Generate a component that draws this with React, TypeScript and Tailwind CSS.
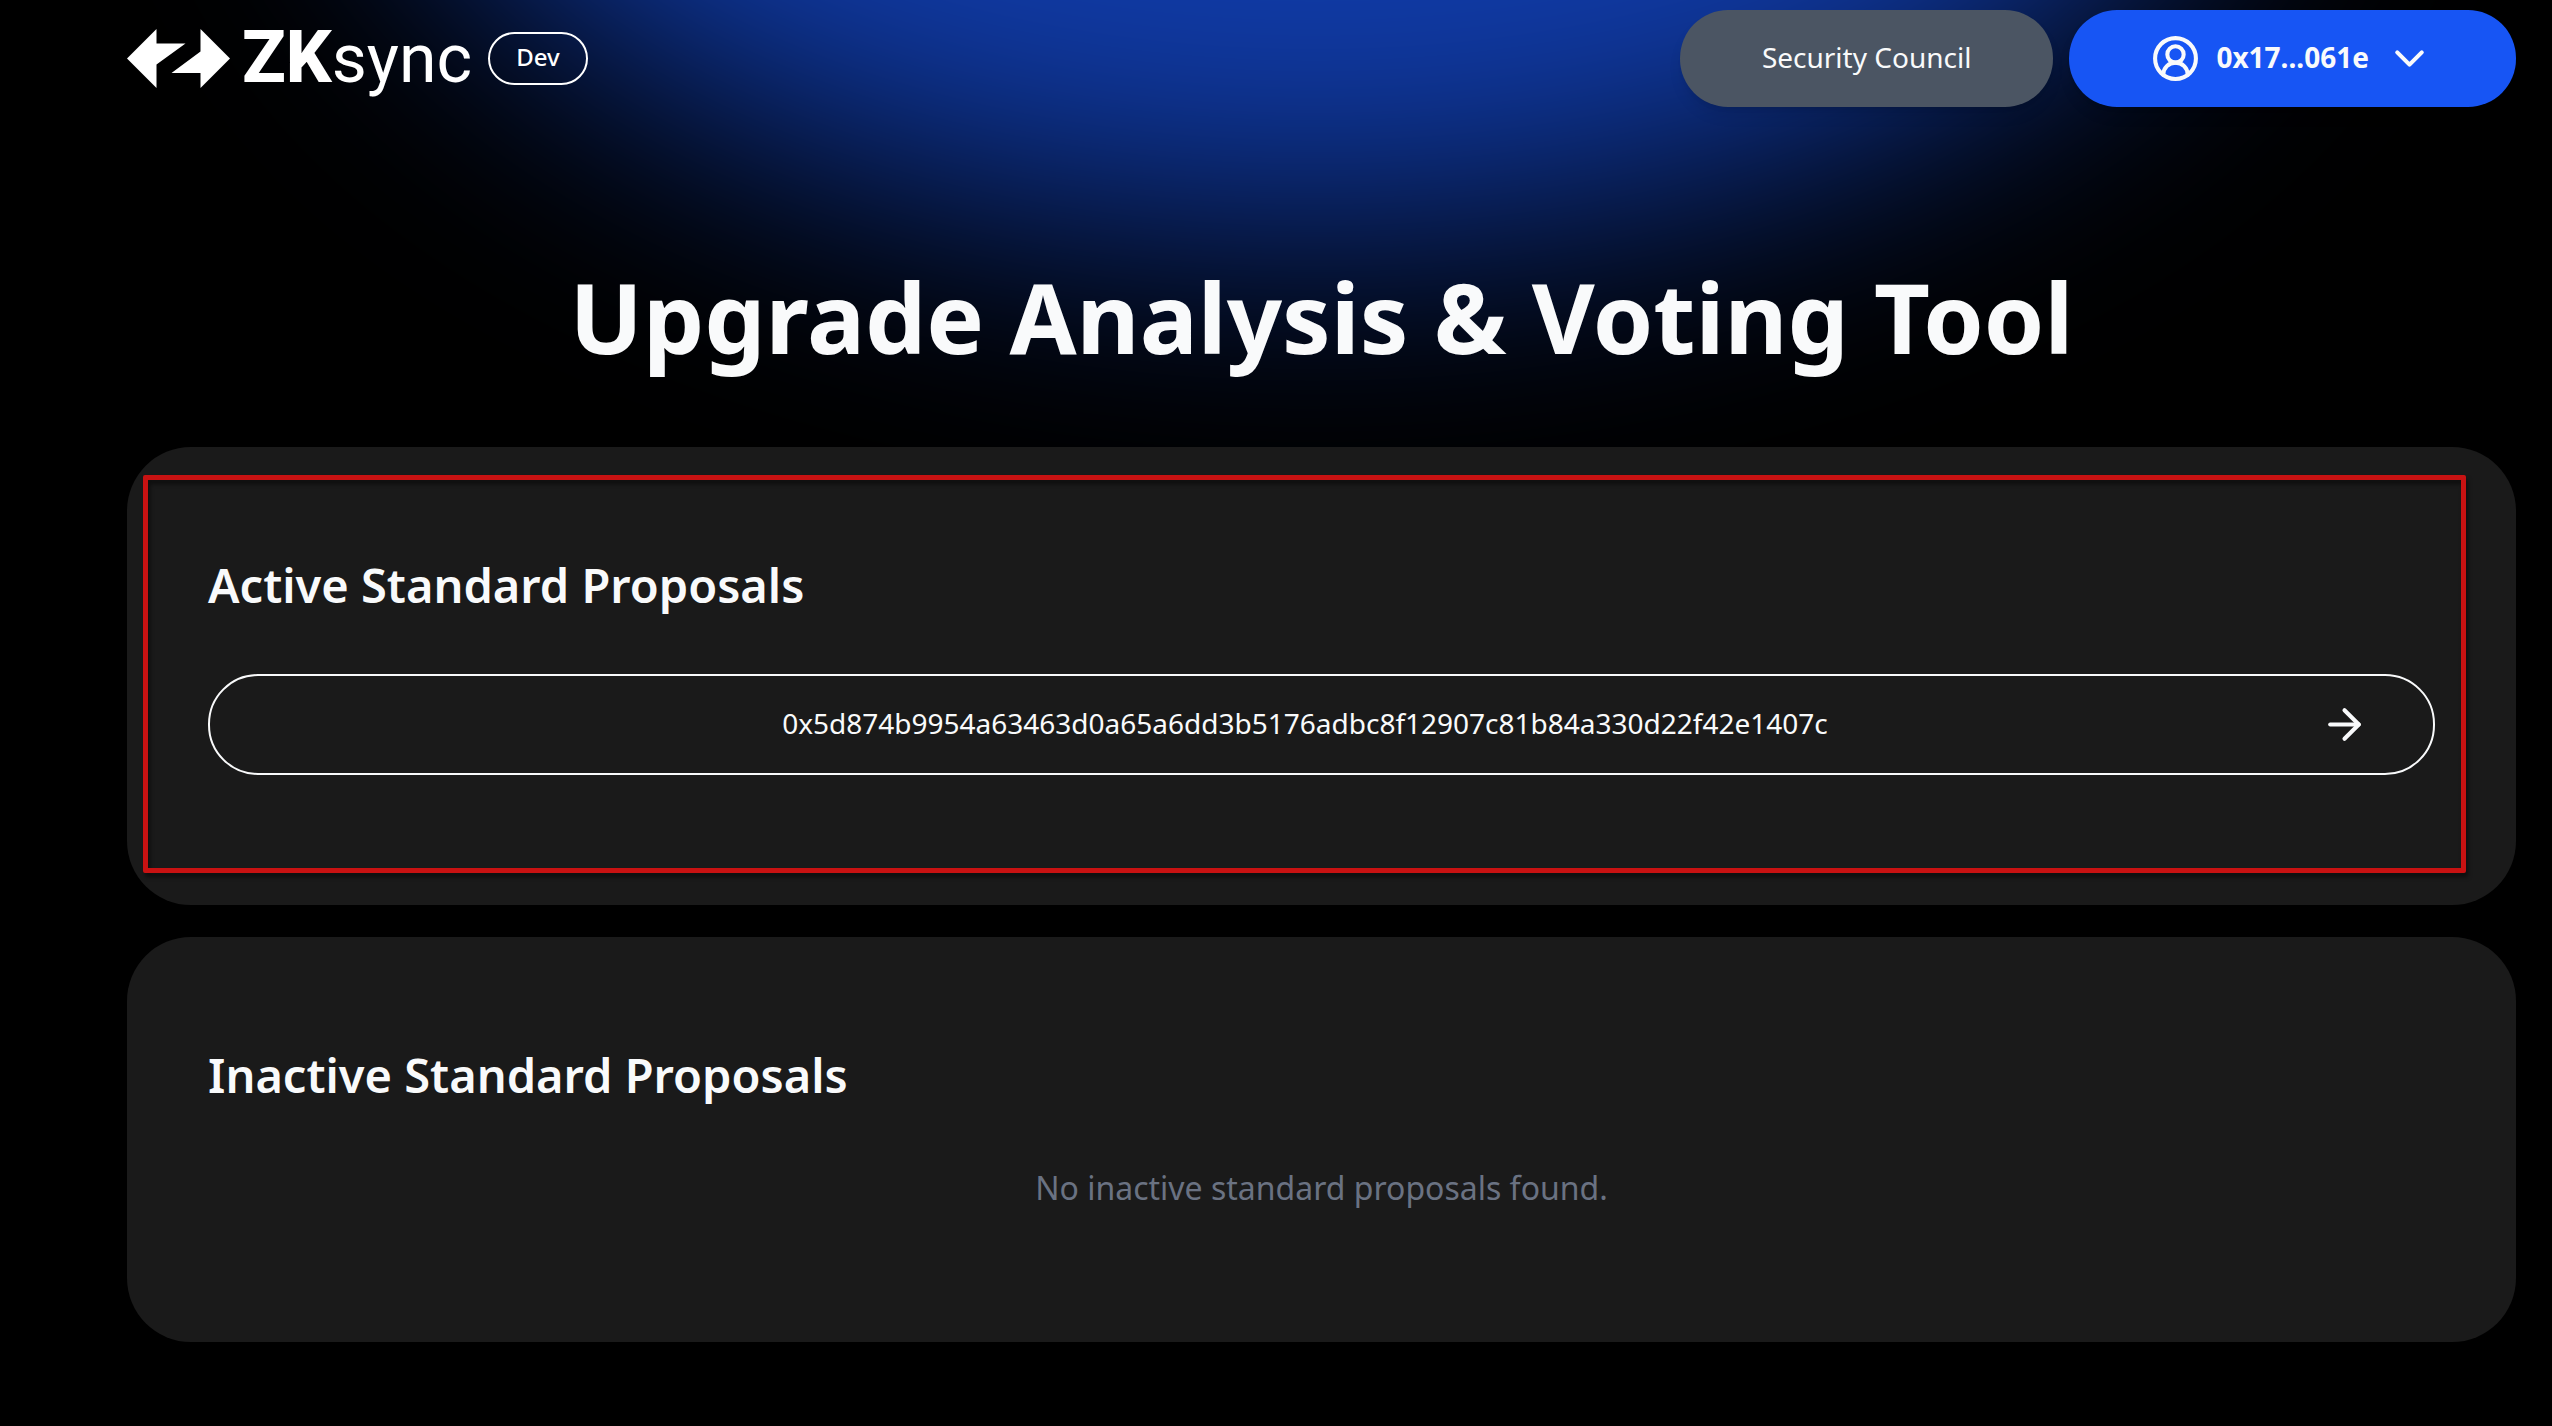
import { ReactNode } from "react";
import { ArrowRight, ChevronDown, CircleUserRound } from "lucide-react";

function LogoMark() {
  return (
    <svg viewBox="0 0 103 59" className="h-[59px] w-[103px]" fill="currentColor" aria-hidden="true">
      <path d="M0 29.5 29.5 0v14.5H58.5L29.5 35.5V59Z" />
      <path d="M103 29.5 73.5 0v22.5L44.5 44H73.5V59Z" />
    </svg>
  );
}

function Header() {
  return (
    <header className="flex items-center justify-between">
      <div className="flex items-center gap-4">
        <a href="#" aria-label="ZKsync home" className="flex items-center gap-3 text-white">
          <LogoMark />
          <span className="font-[Roboto,sans-serif] text-[68px] leading-[72px]">
            <span className="text-[72px] font-extrabold">ZK</span>sync
          </span>
        </a>
        <span className="rounded-full border-2 border-white px-[26px] pt-[7px] pb-[10px] text-2xl font-medium text-white">
          Dev
        </span>
      </div>
      <div className="flex gap-4">
        <button className="h-[97px] rounded-[48px] bg-[#4b5563] px-[82px] pb-1 text-[28px] text-gray-50 shadow-lg">
          Security Council
        </button>
        <button className="flex h-[97px] items-center rounded-[48px] bg-[#1755f4] px-[82px] text-[28px] font-bold text-gray-50 shadow-lg">
          <CircleUserRound className="mr-4 size-[49px]" />
          <span className="pb-1">0x17...061e</span>
          <ChevronDown className="ml-4 size-[49px]" />
        </button>
      </div>
    </header>
  );
}

function Card({ title, children }: { title: string; children: ReactNode }) {
  return (
    <section className="relative rounded-[64px] bg-[#1a1a1a] p-[81px] pb-[130px]">
      <h2 className="py-8 text-[47px] leading-[50px] font-semibold text-gray-50">{title}</h2>
      {children}
    </section>
  );
}

export default function App() {
  return (
    <div className="relative isolate min-h-screen overflow-hidden bg-black pt-[10px] pr-9 pb-20 pl-[127px] font-['Noto_Sans',sans-serif]">
      {/* Soft blue glow behind the header */}
      <div
        aria-hidden="true"
        className="absolute -top-[810px] left-[15%] -z-10 h-[1030px] w-[73%] rounded-[50%] bg-[#103ba8] blur-[130px]"
      />
      <Header />
      <main>
        <h1 className="pt-[161px] pb-[82px] text-center text-[97px] leading-[97px] font-bold text-gray-50">
          Upgrade Analysis &amp; Voting Tool
        </h1>
        <div className="flex flex-col gap-8">
          <Card title="Active Standard Proposals">
            <button className="mt-8 flex h-[101px] w-full items-center rounded-[50px] border-2 border-gray-50 pr-16 pl-20 text-[28px] text-gray-50">
              <span className="flex-1 pb-1">
                0x5d874b9954a63463d0a65a6dd3b5176adbc8f12907c81b84a330d22f42e1407c
              </span>
              <ArrowRight className="size-[49px]" />
            </button>
            <div className="pointer-events-none absolute top-7 right-[50px] bottom-8 left-4 rounded-[2px] border-[5px] border-[#c81212] drop-shadow-[2px_4px_2px_rgba(0,0,0,0.5)]" />
          </Card>
          <Card title="Inactive Standard Proposals">
            <p className="pt-8 text-center text-[32px] leading-[48px] text-gray-500">
              No inactive standard proposals found.
            </p>
          </Card>
        </div>
      </main>
    </div>
  );
}
